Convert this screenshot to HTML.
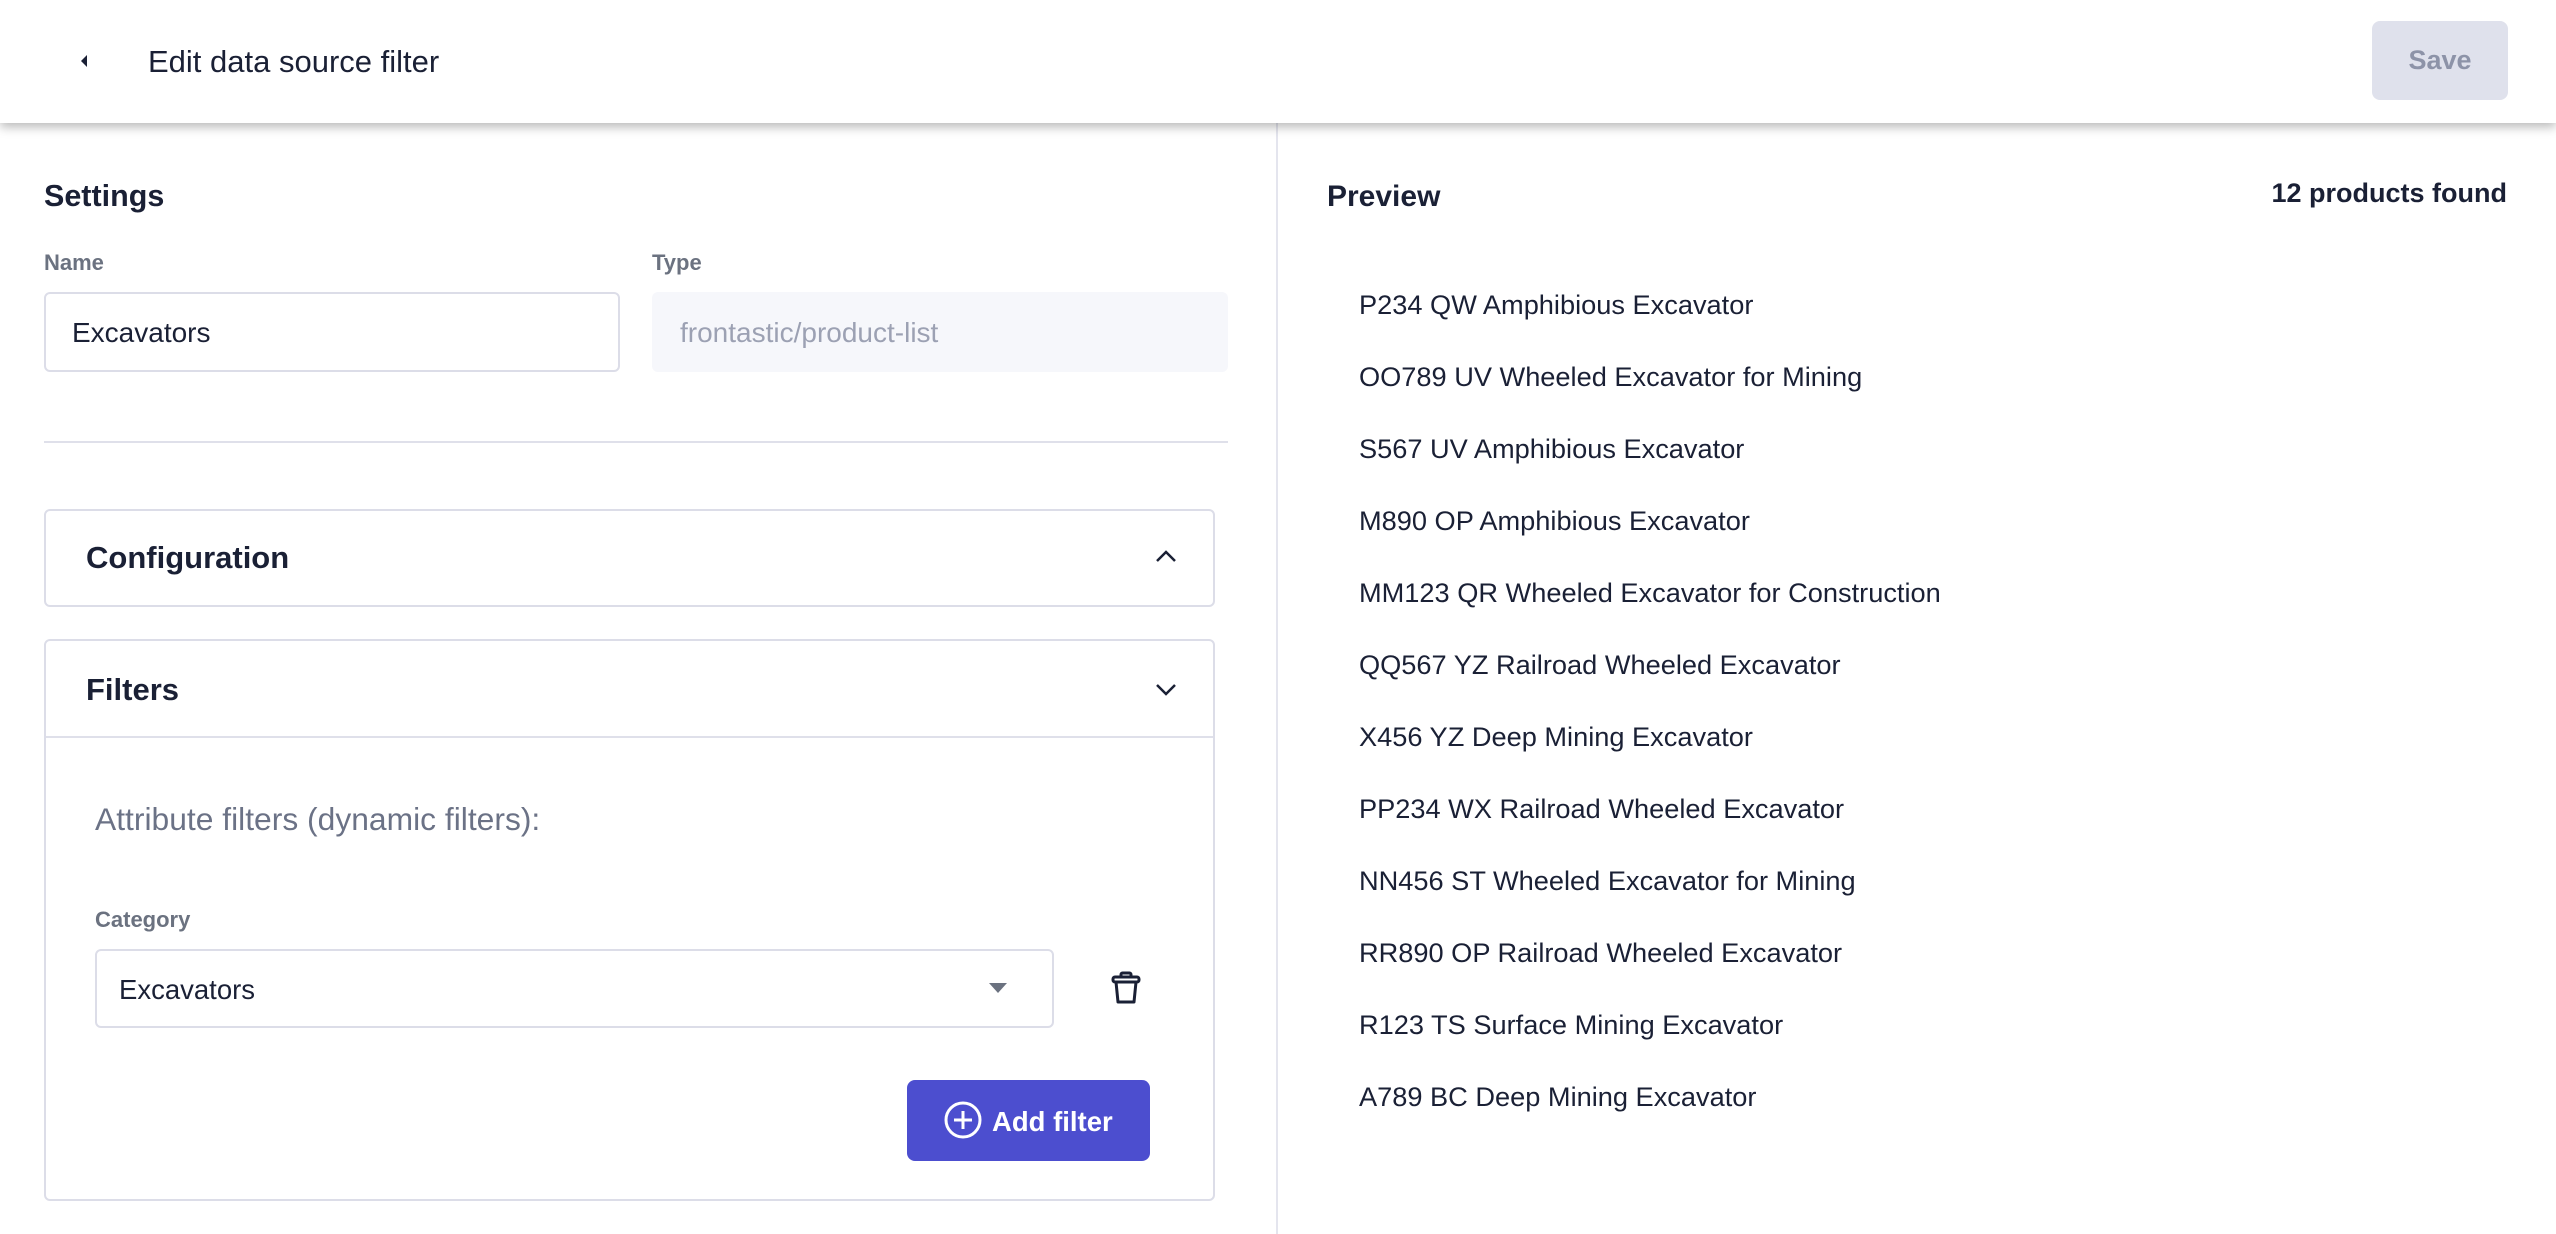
<!DOCTYPE html>
<html><head><meta charset="utf-8"><style>
*{margin:0;padding:0;box-sizing:border-box}
body{width:2556px;height:1234px;background:#fff;font-family:"Liberation Sans",Arial,sans-serif;color:#1a2035;position:relative;overflow:hidden}
.a{position:absolute;white-space:nowrap}
.hdr{position:absolute;left:0;top:0;width:2556px;height:123px;background:#fff;box-shadow:0 4px 10px rgba(0,0,0,0.28);z-index:2}
.vline{position:absolute;left:1276px;top:123px;width:2px;height:1111px;background:#e4e5ee}
.lbl{font-size:22px;font-weight:bold;color:#6b7280;line-height:22px}
.box{position:absolute;border:2px solid #dcdde8;border-radius:6px}
.prod{position:absolute;left:1359px;font-size:27.2px;line-height:28px;color:#1a2035}
</style></head><body>
<div class="hdr">
  <svg class="a" style="left:78px;top:54px" width="12" height="14" viewBox="0 0 12 14"><path d="M9 1 L3 7 L9 13 Z" fill="#1a2035"/></svg>
  <div class="a" style="left:148px;top:46px;font-size:31px;line-height:31px">Edit data source filter</div>
  <div class="a" style="left:2372px;top:21px;width:136px;height:79px;background:#dfe1ec;border-radius:8px;color:#8d93a8;font-weight:bold;font-size:27px;line-height:79px;text-align:center">Save</div>
</div>
<div class="vline"></div>

<div class="a" style="left:44px;top:181px;font-size:30.5px;line-height:30px;font-weight:bold">Settings</div>
<div class="a lbl" style="left:44px;top:252px">Name</div>
<div class="a lbl" style="left:652px;top:252px">Type</div>
<div class="box" style="left:44px;top:292px;width:576px;height:80px"></div>
<div class="a" style="left:72px;top:319px;font-size:28px;line-height:27px">Excavators</div>
<div class="a" style="left:652px;top:292px;width:576px;height:80px;background:#f6f7fb;border-radius:6px"></div>
<div class="a" style="left:680px;top:319px;font-size:28px;line-height:27px;color:#9ca1b3">frontastic/product-list</div>
<div class="a" style="left:44px;top:441px;width:1184px;height:2px;background:#dfe0ea"></div>

<div class="box" style="left:44px;top:509px;width:1171px;height:98px"></div>
<div class="a" style="left:86px;top:542px;font-size:31px;line-height:31px;font-weight:bold">Configuration</div>
<svg class="a" style="left:1154px;top:548px" width="24" height="16" viewBox="0 0 24 16"><path d="M3 13 L12 4 L21 13" fill="none" stroke="#1a2035" stroke-width="2.5"/></svg>

<div class="box" style="left:44px;top:639px;width:1171px;height:562px"></div>
<div class="a" style="left:46px;top:736px;width:1167px;height:2px;background:#dfe0ea"></div>
<div class="a" style="left:86px;top:674px;font-size:31px;line-height:31px;font-weight:bold">Filters</div>
<svg class="a" style="left:1154px;top:682px" width="24" height="16" viewBox="0 0 24 16"><path d="M3 3 L12 12 L21 3" fill="none" stroke="#1a2035" stroke-width="2.5"/></svg>
<div class="a" style="left:95px;top:804px;font-size:31.8px;line-height:31px;color:#6b7286">Attribute filters (dynamic filters):</div>
<div class="a lbl" style="left:95px;top:909px">Category</div>
<div class="box" style="left:95px;top:949px;width:959px;height:79px"></div>
<div class="a" style="left:119px;top:976px;font-size:27.5px;line-height:27px">Excavators</div>
<svg class="a" style="left:988px;top:982px" width="20" height="12" viewBox="0 0 20 12"><path d="M1 1 L19 1 L10 11 Z" fill="#6b7280"/></svg>
<svg class="a" style="left:1110px;top:970px" width="32" height="36" viewBox="0 0 32 36"><g fill="none" stroke="#1a2035" stroke-width="3" stroke-linejoin="round"><rect x="11" y="3" width="10" height="4" rx="1.5"/><rect x="3" y="7" width="26" height="5" rx="2"/><path d="M6 12 L8 32 L24 32 L26 12"/></g></svg>
<div class="a" style="left:907px;top:1080px;width:243px;height:81px;background:#4c4ecf;border-radius:8px"></div>
<svg class="a" style="left:943px;top:1100px" width="40" height="40" viewBox="0 0 40 40"><circle cx="20" cy="20" r="17" fill="none" stroke="#fff" stroke-width="3"/><path d="M20 11 V29 M11 20 H29" stroke="#fff" stroke-width="3"/></svg>
<div class="a" style="left:992px;top:1108px;font-size:27.5px;line-height:27px;font-weight:bold;color:#fff">Add filter</div>

<div class="a" style="left:1327px;top:182px;font-size:30px;line-height:30px;font-weight:bold">Preview</div>
<div class="a" style="right:49px;top:180px;font-size:27px;line-height:26px;font-weight:bold">12 products found</div>

<div class="prod" style="top:291px">P234 QW Amphibious Excavator</div>
<div class="prod" style="top:363px">OO789 UV Wheeled Excavator for Mining</div>
<div class="prod" style="top:435px">S567 UV Amphibious Excavator</div>
<div class="prod" style="top:507px">M890 OP Amphibious Excavator</div>
<div class="prod" style="top:579px">MM123 QR Wheeled Excavator for Construction</div>
<div class="prod" style="top:651px">QQ567 YZ Railroad Wheeled Excavator</div>
<div class="prod" style="top:723px">X456 YZ Deep Mining Excavator</div>
<div class="prod" style="top:795px">PP234 WX Railroad Wheeled Excavator</div>
<div class="prod" style="top:867px">NN456 ST Wheeled Excavator for Mining</div>
<div class="prod" style="top:939px">RR890 OP Railroad Wheeled Excavator</div>
<div class="prod" style="top:1011px">R123 TS Surface Mining Excavator</div>
<div class="prod" style="top:1083px">A789 BC Deep Mining Excavator</div>
</body></html>
